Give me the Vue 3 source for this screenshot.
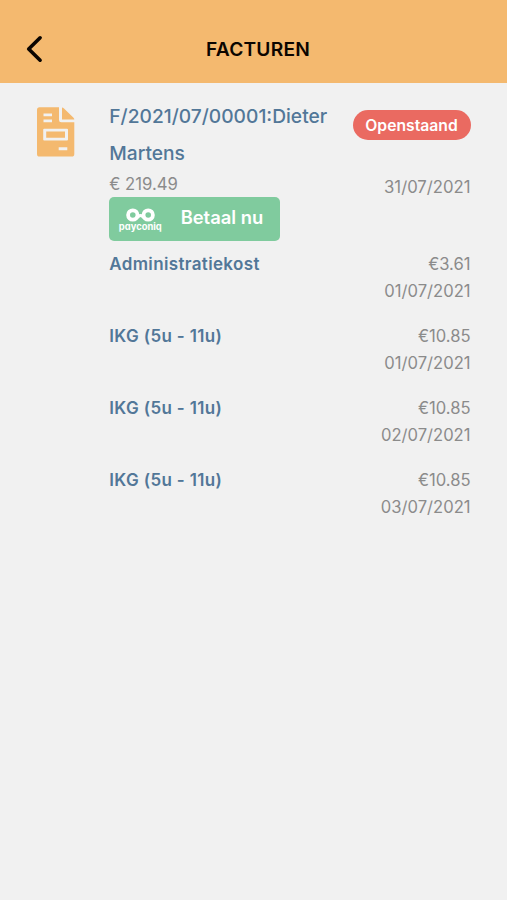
<script setup>
const lines = [
  { name: 'Administratiekost', amount: '€3.61', date: '01/07/2021' },
  { name: 'IKG (5u - 11u)', amount: '€10.85', date: '01/07/2021' },
  { name: 'IKG (5u - 11u)', amount: '€10.85', date: '02/07/2021' },
  { name: 'IKG (5u - 11u)', amount: '€10.85', date: '03/07/2021' },
]
</script>

<template>
  <div class="screen">
    <header class="bar">
      <button class="back" aria-label="Terug">
        <svg width="18" height="28" viewBox="0 0 18 28">
          <path d="M15.1 2.8 L3.7 14 L15.1 25.2" fill="none" stroke="#0b0500" stroke-width="3.6" stroke-linecap="round" stroke-linejoin="round" />
        </svg>
      </button>
      <h1 class="title">FACTUREN</h1>
    </header>

    <main class="content">
      <svg class="doc" width="38" height="50" viewBox="0 0 38 50">
        <path
          fill="#f4b96f"
          fill-rule="evenodd"
          d="M2.5 0.3H22V13Q22 15.3 24.3 15.3H37.3V47Q37.3 49.6 34.7 49.6H2.5Q0 49.6 0 47V2.8Q0 0.3 2.5 0.3Z M6.5 6.5V9.3H15V6.5Z M6.5 12.5V15.3H15V12.5Z M7.2 21.7Q6.2 21.7 6.2 22.7V32.6Q6.2 33.6 7.2 33.6H30Q31 33.6 31 32.6V22.7Q31 21.7 30 21.7Z M9.2 24.6H28V30.8H9.2Z M21.7 40.3V43.2H30.3V40.3Z"
        />
        <path fill="#f4b96f" d="M25 0.4Q26 0.4 27 1.4L36.3 10.6Q37.3 11.6 37.3 12.6H25Z" />
      </svg>

      <section class="invoice">
        <div class="head">
          <div class="main">
            <h2 class="number">F/2021/07/00001:Dieter<br />Martens</h2>
            <div class="total">€ 219.49</div>
            <button class="pay">
              <span class="logo">
                <svg width="29" height="14" viewBox="0 0 29 14">
                  <g fill="none" stroke="#fff" stroke-width="3.8">
                    <circle cx="6.8" cy="7" r="4.7" />
                    <circle cx="22.2" cy="7" r="4.7" />
                    <path d="M9.6 10.2C12 9.4 13 7.4 14.5 7.4S17 9.4 19.4 10.2" stroke-width="3" />
                  </g>
                </svg>
                <span class="brand">payconiq</span>
              </span>
              <span class="label">Betaal nu</span>
            </button>
          </div>
          <div class="side">
            <span class="badge">Openstaand</span>
            <span class="due">31/07/2021</span>
          </div>
        </div>

        <div v-for="(line, i) in lines" :key="i" class="line">
          <span class="name">{{ line.name }}</span>
          <span class="values">
            <span>{{ line.amount }}</span>
            <span>{{ line.date }}</span>
          </span>
        </div>
      </section>
    </main>
  </div>
</template>

<style>
body {
  background: #f1f1f1;
}
</style>

<style scoped>
.screen {
  min-height: 900px;
  background: #f1f1f1;
  font-family: Inter, "Liberation Sans", sans-serif;
}
.bar {
  box-sizing: border-box;
  height: 83px;
  padding: 14px 24px 0;
  display: grid;
  grid-template-columns: 24px 1fr 15px;
  align-items: center;
  background: #f4b96f;
}
button {
  border: 0;
  font-family: inherit;
}
.back {
  display: flex;
  padding: 0 0 0 1px;
  background: none;
}
.back svg {
  flex: none;
}
.title {
  margin: 0;
  text-align: center;
  font-size: 19.2px;
  letter-spacing: 0.2px;
  font-weight: 600;
  color: #0b0500;
}
.content {
  display: flex;
  gap: 34.3px;
  padding: 24px 36.5px 0 37px;
}
.doc {
  flex: none;
}
.invoice {
  flex: 1;
  min-width: 0;
}
.head {
  display: flex;
  justify-content: space-between;
  height: 143px;
}
.number {
  margin: -9px 0 0;
  font-size: 19.2px;
  line-height: 37px;
  font-weight: 500;
  color: #527798;
  white-space: nowrap;
}
.total {
  height: 25px;
  line-height: 25px;
  font-size: 16.7px;
  color: #8b8b8b;
}
.pay {
  width: 171px;
  height: 44px;
  padding: 0 17px 0 9.5px;
  display: flex;
  justify-content: space-between;
  background: #80cb9e;
  border-radius: 5px;
  color: #fff;
}
.logo {
  width: 43px;
  padding-top: 11px;
  display: flex;
  flex-direction: column;
  align-items: center;
}
.brand {
  margin-top: -1px;
  font-size: 9.4px;
  line-height: 11px;
  font-weight: 700;
  font-feature-settings: "cv11";
}
.label {
  font-size: 18.4px;
  line-height: 41px;
  font-weight: 600;
}
.side {
  display: flex;
  flex-direction: column;
  align-items: flex-end;
  padding-top: 3px;
}
.badge {
  box-sizing: border-box;
  width: 118px;
  height: 30px;
  border-radius: 15px;
  background: #ea6a61;
  color: #fff;
  text-align: center;
  font-size: 15.7px;
  line-height: 31px;
  font-weight: 600;
}
.due {
  margin-top: 34px;
  font-size: 16.7px;
  line-height: 26px;
  color: #8b8b8b;
}
.line {
  height: 72px;
  display: flex;
  justify-content: space-between;
  line-height: 27px;
  font-size: 16.6px;
}
.name {
  padding-top: 1px;
  font-size: 17px;
  letter-spacing: 0.35px;
  font-weight: 600;
  color: #527798;
}
.values {
  display: flex;
  flex-direction: column;
  align-items: flex-end;
  padding-top: 1px;
  color: #8b8b8b;
}
</style>
